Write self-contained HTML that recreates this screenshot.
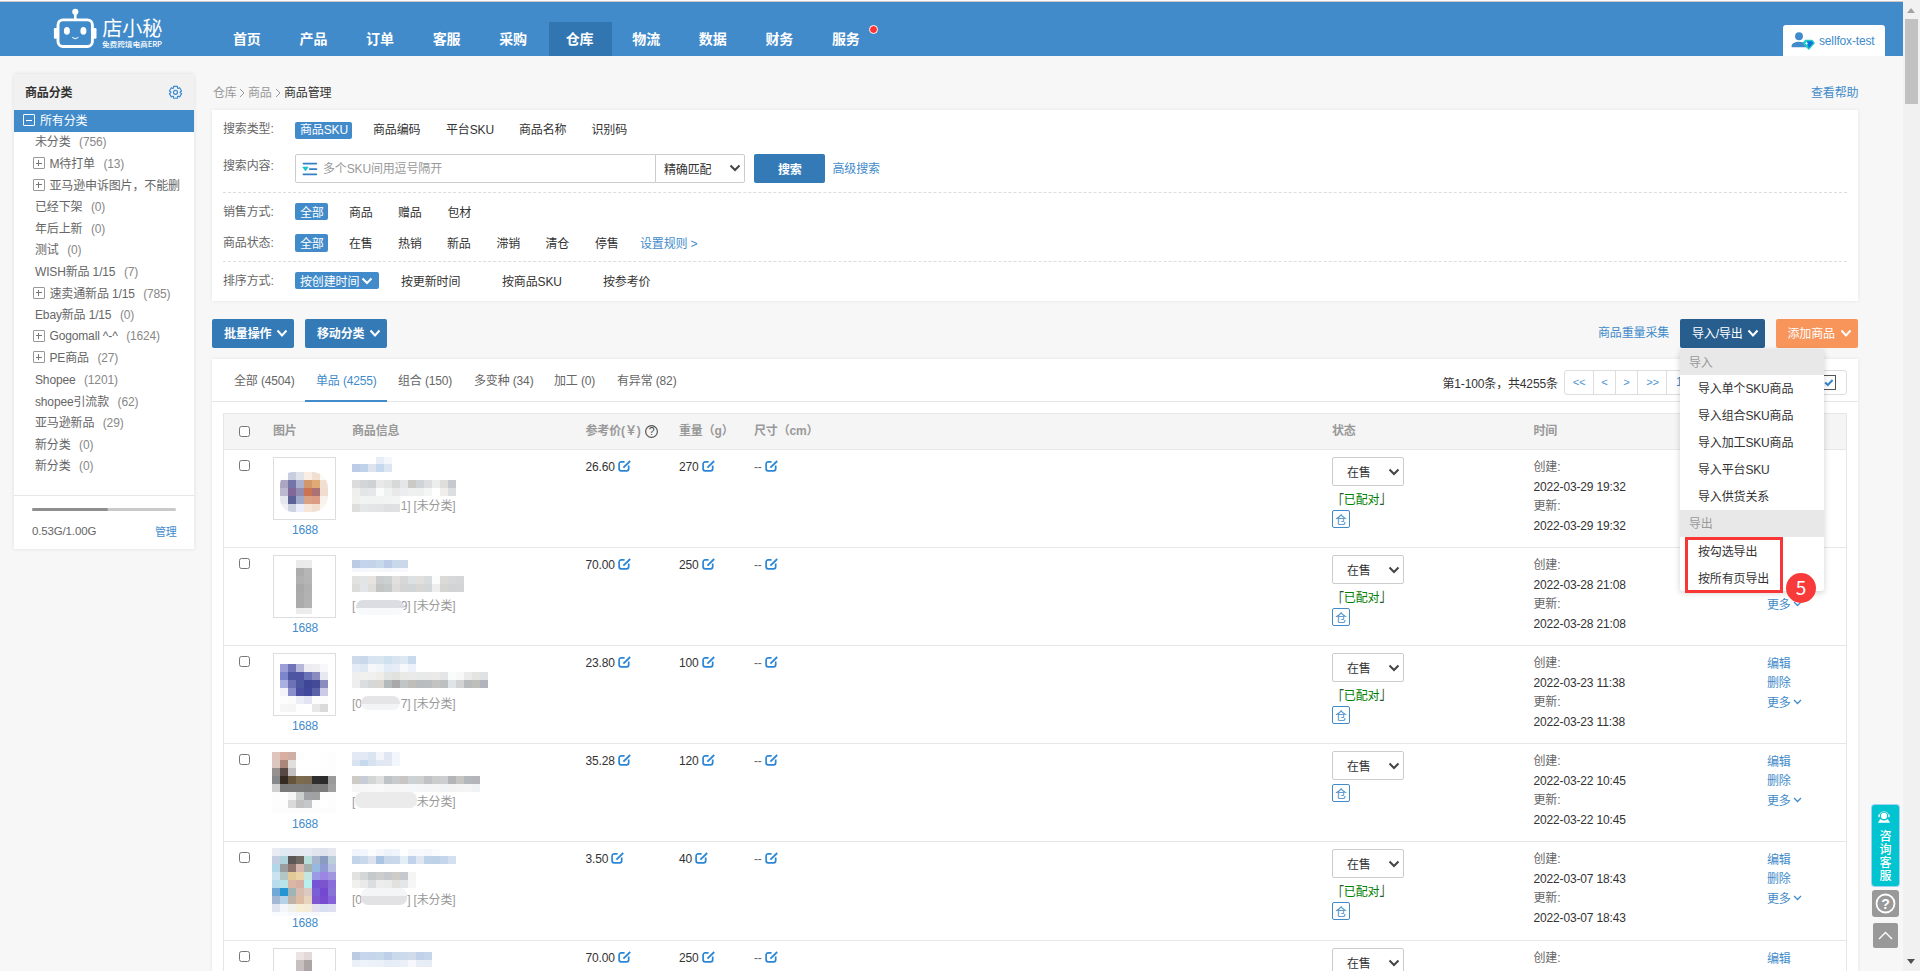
<!DOCTYPE html>
<html lang="zh-CN">
<head>
<meta charset="utf-8">
<title>商品管理</title>
<style>
*{box-sizing:border-box;margin:0;padding:0}
html,body{width:1920px;height:971px;overflow:hidden}
body{background:#f7f7f7;font-family:"Liberation Sans","Noto Sans CJK SC",sans-serif;font-size:12px;color:#333;position:relative;letter-spacing:-0.15px}
a{color:#428bca;text-decoration:none}
.abs{position:absolute}
.t{position:absolute;line-height:16px;height:16px;white-space:nowrap}
.b{font-weight:bold}
.blue{color:#428bca}
.g6{color:#666}
.g9{color:#999}
.w{color:#fff}
#topstrip{left:0;top:0;width:1920px;height:2px;background:linear-gradient(#fbfbfb 0,#fbfbfb 50%,#cdc8c5 50%,#cdc8c5 100%)}
#hdr{left:0;top:2px;width:1903px;height:54px;background:#428bca}
#nav span{position:absolute;top:30px;font-size:14px;font-weight:bold;color:#fff;line-height:18px;white-space:nowrap}
#navact{left:549px;top:22px;width:63px;height:34px;background:#3276b1}
#user{left:1783px;top:25px;width:102px;height:31px;background:#fff;border-radius:3px 3px 0 0}
#sb{left:1903px;top:0;width:17px;height:971px;background:#f1f1f1}
#sbthumb{left:1905px;top:19px;width:13px;height:85px;background:#c1c1c1}
#side{left:14px;top:74px;width:180px;height:475px;background:#fff;box-shadow:0 0 4px rgba(0,0,0,.10)}
#sidehead{left:0;top:0;width:180px;height:36px;background:#f1f1f1}
#sidesel{left:0;top:36px;width:180px;height:22px;background:#428bca}
.panel{position:absolute;background:#fff;box-shadow:0 0 4px rgba(0,0,0,.08)}
.pill{position:absolute;background:#428bca;border-radius:2px;height:17px}
.dash{position:absolute;left:223px;width:1624px;height:0;border-top:1px dashed #ddd}
.btn{position:absolute;height:29px;border-radius:2px;top:319px}
.plus{position:absolute;width:12px;height:12px;border:1px solid #999;border-radius:1px}
.plus:before{content:"";position:absolute;left:2px;top:4px;width:6px;height:2px;background:#777;height:1px;top:4.5px}
.plus:after{content:"";position:absolute;left:4.5px;top:2px;width:1px;height:6px;background:#777}
.cb{position:absolute;width:11px;height:11px;border:1px solid #767676;border-radius:2.5px;background:#fff}
.sep{position:absolute;left:224px;width:1622px;height:1px;background:#e7e7e7}
.thumb{position:absolute;left:273px;width:63px;height:63px;border:1px solid #ddd;background:#fff;overflow:hidden}
.sel{position:absolute;left:1332px;width:72px;height:29px;border:1px solid #ccc;border-radius:2px;background:#fff}
.cang{position:absolute;left:1332px;width:18px;height:18px;border:1px solid #428bca;border-radius:2px;color:#428bca;font-size:11.5px;line-height:18px;text-align:center;letter-spacing:0}
.grn{color:#008000}
.bk1,.bk2{display:inline-block;transform:scaleY(1.55);color:#2d5a2d}
.bk1{transform-origin:50% 22%}
.bk2{transform-origin:50% 82%}
</style>
</head>
<body>
<div id="topstrip" class="abs"></div><div id="hdr" class="abs"></div><div id="navact" class="abs"></div>
<svg class="abs" style="left:50px;top:4px" width="120" height="50" viewBox="0 0 120 50">
<circle cx="25.3" cy="7.8" r="3.1" fill="#fff"/>
<rect x="24" y="9" width="2.6" height="7" fill="#fff"/>
<rect x="8" y="15.9" width="34.4" height="26.6" rx="5" ry="5" fill="none" stroke="#fff" stroke-width="2.9"/>
<rect x="3.9" y="24" width="3.6" height="10.8" rx="1.2" fill="#fff"/>
<rect x="42.9" y="24" width="3.6" height="10.8" rx="1.2" fill="#fff"/>
<ellipse cx="16.9" cy="26.9" rx="3" ry="3.8" fill="#fff"/>
<ellipse cx="33.4" cy="26.9" rx="3" ry="3.8" fill="#fff"/>
<path d="M22.6 33.4q2.7 2.6 5.4 0" fill="none" stroke="#fff" stroke-width="1.1" opacity=".85" stroke-linecap="round"/>
<text x="52.2" y="32" font-size="20.5" font-weight="400" fill="#fff" font-family="Noto Sans CJK SC, sans-serif" textLength="60" lengthAdjust="spacingAndGlyphs">店小秘</text>
<text x="52" y="43.3" font-size="7.4" font-weight="500" fill="#fff" font-family="Noto Sans CJK SC, sans-serif" textLength="60" lengthAdjust="spacingAndGlyphs">免费跨境电商ERP</text>
</svg>
<div id="nav"><span style="left:233px">首页</span><span style="left:299.55px">产品</span><span style="left:366.1px">订单</span><span style="left:432.65px">客服</span><span style="left:499.2px">采购</span><span style="left:565.75px">仓库</span><span style="left:632.3px">物流</span><span style="left:698.85px">数据</span><span style="left:765.4px">财务</span><span style="left:831.95px">服务</span></div>
<div class="abs" style="left:868.5px;top:24.5px;width:9px;height:9px;border-radius:50%;background:#f33;border:1px solid #fff"></div>
<div id="user" class="abs"></div><svg class="abs" style="left:1785px;top:26px" width="40" height="28" viewBox="0 0 40 28">
<circle cx="14" cy="10.2" r="3.95" fill="#428bca"/>
<path d="M6.6 21.3v-1.2c0-2.6 3.3-4.3 7.4-4.3c3.2 0 5.4 0.9 6.6 2.2l2 3.3z" fill="#428bca"/>
<path d="M20.3 13.8h7l2.7 3.2l-6.2 7.1l-6.5-7.1z" fill="#1fcbc5"/>
<path d="M21.8 15.2h5.2l1.2 1.8l-4.4 5.2z" fill="#0b72e0"/>
<path d="M21.6 15.5l0.55 1.2l1.2 0.55l-1.2 0.55l-0.55 1.2l-0.55-1.2l-1.2-0.55l1.2-0.55z" fill="#fff"/>
</svg>
<div class="t blue" style="left:1819px;top:32.5px;">sellfox-test</div>
<div id="sb" class="abs"></div><div id="sbthumb" class="abs"></div>
<div class="abs" style="left:1907px;top:8px;width:0;height:0;border-left:4.5px solid transparent;border-right:4.5px solid transparent;border-bottom:5px solid #a3a3a3"></div>
<div class="abs" style="left:1907px;top:959px;width:0;height:0;border-left:4.5px solid transparent;border-right:4.5px solid transparent;border-top:5px solid #505050"></div>
<div id="side" class="abs"><div id="sidehead" class="abs"></div><div id="sidesel" class="abs"></div></div>
<div class="t b" style="left:25px;top:85px;">商品分类</div>
<svg class="abs" style="left:167px;top:84px" width="17" height="17" viewBox="0 0 17 17"><path d="M6.50 4.05 L6.58 2.40 L10.42 2.40 L10.50 4.05 L11.18 4.44 L12.65 3.69 L14.56 7.01 L13.18 7.91 L13.18 8.69 L14.56 9.59 L12.65 12.91 L11.18 12.16 L10.50 12.55 L10.42 14.20 L6.58 14.20 L6.50 12.55 L5.82 12.16 L4.35 12.91 L2.44 9.59 L3.82 8.69 L3.82 7.91 L2.44 7.01 L4.35 3.69 L5.82 4.44Z" fill="none" stroke="#3a8ad2" stroke-width="1.15" stroke-linejoin="round"/><circle cx="8.5" cy="8.3" r="2.0" fill="none" stroke="#3a8ad2" stroke-width="1.15"/></svg>
<div class="abs" style="left:23px;top:114px;width:12px;height:12px;border:1px solid #fff;border-radius:1px"><div class="abs" style="left:2px;top:4.5px;width:6px;height:1px;background:#fff"></div></div>
<div class="t w" style="left:40px;top:113px;">所有分类</div>
<div class="t g6" style="left:35px;top:134.4px;">未分类<span style="margin-left:8.5px;color:#888">(756)</span></div>
<div class="plus" style="left:32.5px;top:157px"></div>
<div class="t g6" style="left:49.5px;top:156px;">M待打单<span style="margin-left:8.5px;color:#888">(13)</span></div>
<div class="plus" style="left:32.5px;top:178.6px"></div>
<div class="t g6" style="left:49.5px;top:177.6px;">亚马逊申诉图片，不能删</div>
<div class="t g6" style="left:35px;top:199.2px;">已经下架<span style="margin-left:8.5px;color:#888">(0)</span></div>
<div class="t g6" style="left:35px;top:220.8px;">年后上新<span style="margin-left:8.5px;color:#888">(0)</span></div>
<div class="t g6" style="left:35px;top:242.4px;">测试<span style="margin-left:8.5px;color:#888">(0)</span></div>
<div class="t g6" style="left:35px;top:264px;">WISH新品 1/15<span style="margin-left:8.5px;color:#888">(7)</span></div>
<div class="plus" style="left:32.5px;top:286.6px"></div>
<div class="t g6" style="left:49.5px;top:285.6px;">速卖通新品 1/15<span style="margin-left:8.5px;color:#888">(785)</span></div>
<div class="t g6" style="left:35px;top:307.2px;">Ebay新品 1/15<span style="margin-left:8.5px;color:#888">(0)</span></div>
<div class="plus" style="left:32.5px;top:329.8px"></div>
<div class="t g6" style="left:49.5px;top:328.3px;">Gogomall ^-^<span style="margin-left:8.5px;color:#888">(1624)</span></div>
<div class="plus" style="left:32.5px;top:351.4px"></div>
<div class="t g6" style="left:49.5px;top:350.4px;">PE商品<span style="margin-left:8.5px;color:#888">(27)</span></div>
<div class="t g6" style="left:35px;top:371.5px;">Shopee<span style="margin-left:8.5px;color:#888">(1201)</span></div>
<div class="t g6" style="left:35px;top:393.6px;">shopee引流款<span style="margin-left:8.5px;color:#888">(62)</span></div>
<div class="t g6" style="left:35px;top:415.2px;">亚马逊新品<span style="margin-left:8.5px;color:#888">(29)</span></div>
<div class="t g6" style="left:35px;top:436.8px;">新分类<span style="margin-left:8.5px;color:#888">(0)</span></div>
<div class="t g6" style="left:35px;top:458.4px;">新分类<span style="margin-left:8.5px;color:#888">(0)</span></div>
<div class="abs" style="left:14px;top:495px;width:180px;height:1px;background:#e7e7e7"></div>
<div class="abs" style="left:32px;top:507.5px;width:144px;height:3px;background:#c9c9c9;border-radius:2px"><div style="width:76px;height:3px;background:#8e8e8e;border-radius:2px"></div></div>
<div class="t g6" style="left:32px;top:523px;font-size:11.5px">0.53G/1.00G</div>
<div class="t blue" style="left:155px;top:523.5px;font-size:11px">管理</div>
<div class="t g9" style="left:213px;top:85px;">仓库</div>
<div class="t" style="left:239px;top:84px;top:86px"><svg width="6" height="10" viewBox="0 0 6 10"><path d="M1 1l4 4-4 4" fill="none" stroke="#999" stroke-width="1"/></svg></div>
<div class="t g9" style="left:248px;top:85px;">商品</div>
<div class="t" style="left:275px;top:84px;top:86px"><svg width="6" height="10" viewBox="0 0 6 10"><path d="M1 1l4 4-4 4" fill="none" stroke="#999" stroke-width="1"/></svg></div>
<div class="t" style="left:284px;top:85px;">商品管理</div>
<div class="t blue" style="left:1811px;top:84.5px;">查看帮助</div>
<div class="panel" style="left:212px;top:110px;width:1646px;height:191px"></div>
<div class="t g6" style="left:223px;top:121px;">搜索类型:</div>
<div class="pill" style="left:295px;top:122px;width:57px"></div>
<div class="t w" style="left:300px;top:121.9px;">商品SKU</div>
<div class="t" style="left:373px;top:121.9px;">商品编码</div>
<div class="t" style="left:446px;top:121.9px;">平台SKU</div>
<div class="t" style="left:519px;top:121.9px;">商品名称</div>
<div class="t" style="left:591.5px;top:121.9px;">识别码</div>
<div class="t g6" style="left:223px;top:157.5px;">搜索内容:</div>
<div class="abs" style="left:295px;top:154px;width:361px;height:29px;border:1px solid #ccc;background:#fff;border-radius:2px 0 0 2px"></div>
<svg class="abs" style="left:300px;top:160px" width="20" height="18" viewBox="0 0 20 18">
<path d="M3.4 3.6H16.4M3.4 14.4H16.4" fill="none" stroke="#337fc5" stroke-width="1.6" stroke-linecap="round"/><path d="M9.8 9.1H16.4" fill="none" stroke="#337fc5" stroke-width="1.9" stroke-linecap="round"/>
<path d="M2.7 7h5.5l-2.75 4z" fill="#17c4cc" stroke="#17c4cc" stroke-width=".6" stroke-linejoin="round"/>
</svg>
<div class="t g9" style="left:323px;top:160.9px;">多个SKU间用逗号隔开</div>
<div class="abs" style="left:655px;top:154px;width:90px;height:29px;border:1px solid #ccc;background:#fff;border-radius:0 2px 2px 0"></div>
<div class="t" style="left:664px;top:161.5px;">精确匹配</div>
<svg class="abs" style="left:729px;top:164px" width="12" height="8" viewBox="0 0 12 8"><path d="M1.5 1.5l4.5 4.5 4.5-4.5" fill="none" stroke="#444" stroke-width="2"/></svg>
<div class="abs" style="left:754px;top:154px;width:71px;height:29px;background:#337ab7;border-radius:2px"></div>
<div class="t w b" style="left:778px;top:161.5px;">搜索</div>
<div class="t blue" style="left:832.5px;top:160.5px;">高级搜索</div>
<div class="dash" style="top:192px"></div>
<div class="t g6" style="left:223px;top:203.5px;">销售方式:</div>
<div class="pill" style="left:295px;top:203px;width:33px"></div>
<div class="t w" style="left:300px;top:204.5px;">全部</div>
<div class="t" style="left:349px;top:204.5px;">商品</div>
<div class="t" style="left:398px;top:204.5px;">赠品</div>
<div class="t" style="left:447.5px;top:204.5px;">包材</div>
<div class="t g6" style="left:223px;top:234.5px;">商品状态:</div>
<div class="pill" style="left:295px;top:234px;width:33px;height:17.5px"></div>
<div class="t w" style="left:300px;top:235.5px;">全部</div>
<div class="t" style="left:349px;top:235.5px;">在售</div>
<div class="t" style="left:398px;top:235.5px;">热销</div>
<div class="t" style="left:447px;top:235.5px;">新品</div>
<div class="t" style="left:496.5px;top:235.5px;">滞销</div>
<div class="t" style="left:545.5px;top:235.5px;">清仓</div>
<div class="t" style="left:595px;top:235.5px;">停售</div>
<div class="t blue" style="left:640px;top:235.5px;">设置规则 &gt;</div>
<div class="dash" style="top:261px"></div>
<div class="t g6" style="left:223px;top:272.5px;">排序方式:</div>
<div class="pill" style="left:295px;top:272px;width:84px"></div>
<div class="t w" style="left:300px;top:273.5px;">按创建时间</div>
<svg class="abs" style="left:361px;top:277px" width="12" height="8" viewBox="0 0 12 8"><path d="M1.5 1.5l4.5 4.5 4.5-4.5" fill="none" stroke="#fff" stroke-width="2"/></svg>
<div class="t" style="left:401px;top:273.5px;">按更新时间</div>
<div class="t" style="left:502px;top:273.5px;">按商品SKU</div>
<div class="t" style="left:603px;top:273.5px;">按参考价</div>
<div class="btn" style="left:212px;width:82px;background:#337ab7"></div>
<div class="t w b" style="left:224px;top:326px;">批量操作</div>
<svg class="abs" style="left:276px;top:329px" width="12" height="9" viewBox="0 0 12 9"><path d="M1.5 1.5l4.5 5 4.5-5" fill="none" stroke="#fff" stroke-width="2"/></svg>
<div class="btn" style="left:305px;width:82px;background:#337ab7"></div>
<div class="t w b" style="left:317px;top:326px;">移动分类</div>
<svg class="abs" style="left:369px;top:329px" width="12" height="9" viewBox="0 0 12 9"><path d="M1.5 1.5l4.5 5 4.5-5" fill="none" stroke="#fff" stroke-width="2"/></svg>
<div class="t blue" style="left:1598px;top:325px;">商品重量采集</div>
<div class="btn" style="left:1680px;width:85px;background:#285e8e"></div>
<div class="t w" style="left:1692px;top:326px;">导入/导出</div>
<svg class="abs" style="left:1747px;top:329px" width="12" height="9" viewBox="0 0 12 9"><path d="M1.5 1.5l4.5 5 4.5-5" fill="none" stroke="#fff" stroke-width="2"/></svg>
<div class="btn" style="left:1776px;width:82px;background:#f8955b"></div>
<div class="t w" style="left:1787.5px;top:326px;">添加商品</div>
<svg class="abs" style="left:1840px;top:329px" width="12" height="9" viewBox="0 0 12 9"><path d="M1.5 1.5l4.5 5 4.5-5" fill="none" stroke="#fff" stroke-width="2"/></svg>
<div class="panel" style="left:212px;top:359px;width:1646px;height:620px"></div>
<div class="t g6" style="left:234px;top:372.5px;">全部 (4504)</div>
<div class="t blue" style="left:316px;top:372.5px;">单品 (4255)</div>
<div class="t g6" style="left:398px;top:372.5px;">组合 (150)</div>
<div class="t g6" style="left:474px;top:372.5px;">多变种 (34)</div>
<div class="t g6" style="left:554px;top:372.5px;">加工 (0)</div>
<div class="t g6" style="left:617px;top:372.5px;">有异常 (82)</div>
<div class="abs" style="left:212px;top:401px;width:1646px;height:1px;background:#e7e7e7"></div>
<div class="abs" style="left:305px;top:400px;width:82px;height:2px;background:#428bca"></div>
<div class="t" style="left:1442.5px;top:375.5px;">第1-100条，共4255条</div>
<div class="abs" style="left:1564px;top:370px;width:283px;height:25px;border:1px solid #ddd;border-radius:3px;background:#fff"></div>
<div class="abs" style="left:1593px;top:371px;width:1px;height:23px;background:#ddd"></div>
<div class="abs" style="left:1615px;top:371px;width:1px;height:23px;background:#ddd"></div>
<div class="abs" style="left:1637px;top:371px;width:1px;height:23px;background:#ddd"></div>
<div class="abs" style="left:1666px;top:371px;width:1px;height:23px;background:#ddd"></div>
<div class="t" style="left:1559px;top:375.2px;font-size:11px;width:40px;text-align:center;color:#4d93cf;letter-spacing:-0.3px;font-family:'Liberation Mono',monospace">&lt;&lt;</div>
<div class="t" style="left:1584.5px;top:375.2px;font-size:11px;width:40px;text-align:center;color:#4d93cf;letter-spacing:-0.3px;font-family:'Liberation Mono',monospace">&lt;</div>
<div class="t" style="left:1606.5px;top:375.2px;font-size:11px;width:40px;text-align:center;color:#4d93cf;letter-spacing:-0.3px;font-family:'Liberation Mono',monospace">&gt;</div>
<div class="t" style="left:1632.5px;top:375.2px;font-size:11px;width:40px;text-align:center;color:#4d93cf;letter-spacing:-0.3px;font-family:'Liberation Mono',monospace">&gt;&gt;</div>
<div class="t blue" style="left:1676px;top:374px;">1</div>
<div class="abs" style="left:1822px;top:375px;width:14px;height:15px;border:1px solid #555;background:#fff"></div>
<svg class="abs" style="left:1824px;top:378px" width="10" height="9" viewBox="0 0 10 9"><path d="M1.2 4.4l2.6 2.6L8.6 2" fill="none" stroke="#3b86c9" stroke-width="2.1"/></svg>
<div class="abs" style="left:223px;top:413px;width:1624px;height:37px;background:#f5f5f5;border:1px solid #e7e7e7"></div>
<div class="abs" style="left:223px;top:449px;width:1px;height:530px;background:#e7e7e7"></div>
<div class="abs" style="left:1846px;top:449px;width:1px;height:530px;background:#e7e7e7"></div>
<div class="cb" style="left:239px;top:426px"></div>
<div class="t b g9" style="left:273px;top:423px;">图片</div>
<div class="t b g9" style="left:352px;top:423px;">商品信息</div>
<div class="t b g9" style="left:585.5px;top:423px;">参考价(￥)</div>
<div class="t b g9" style="left:679px;top:423px;">重量（g）</div>
<div class="t b g9" style="left:754px;top:423px;">尺寸（cm）</div>
<div class="t b g9" style="left:1332px;top:423px;">状态</div>
<div class="t b g9" style="left:1533.5px;top:423px;">时间</div>
<svg class="abs" style="left:645px;top:425px" width="13" height="13" viewBox="0 0 13 13"><circle cx="6.5" cy="6.5" r="5.9" fill="none" stroke="#555" stroke-width="1.2"/><text x="6.5" y="10.2" font-size="10.5" text-anchor="middle" fill="#444" font-family="Liberation Sans, sans-serif">?</text></svg>
<div class="cb" style="left:239px;top:460px"></div>
<div class="thumb" style="top:457px"></div>
<div class="t blue" style="left:292px;top:521.5px;">1688</div>
<div class="t g9" style="left:340px;width:115.5px;text-align:right;top:498px">1] [未分类]</div>
<div class="t" style="left:585.5px;top:458.5px;">26.60</div>
<svg class="abs" style="left:617.8px;top:460.0px" width="14" height="12" viewBox="0 0 14 12"><path d="M6.6 1.9H3.1a2 2 0 0 0-2 2v4.9a2 2 0 0 0 2 2h5.6a2 2 0 0 0 2-2V5.6" fill="none" stroke="#2b86d6" stroke-width="1.7"/><path d="M5.4 7.7L12.2 1" fill="none" stroke="#2b86d6" stroke-width="1.8"/></svg>
<div class="t" style="left:679px;top:458.5px;">270</div>
<svg class="abs" style="left:701.8px;top:460.0px" width="14" height="12" viewBox="0 0 14 12"><path d="M6.6 1.9H3.1a2 2 0 0 0-2 2v4.9a2 2 0 0 0 2 2h5.6a2 2 0 0 0 2-2V5.6" fill="none" stroke="#2b86d6" stroke-width="1.7"/><path d="M5.4 7.7L12.2 1" fill="none" stroke="#2b86d6" stroke-width="1.8"/></svg>
<div class="t g6" style="left:754px;top:458.5px;">--</div>
<svg class="abs" style="left:765px;top:460.0px" width="14" height="12" viewBox="0 0 14 12"><path d="M6.6 1.9H3.1a2 2 0 0 0-2 2v4.9a2 2 0 0 0 2 2h5.6a2 2 0 0 0 2-2V5.6" fill="none" stroke="#2b86d6" stroke-width="1.7"/><path d="M5.4 7.7L12.2 1" fill="none" stroke="#2b86d6" stroke-width="1.8"/></svg>
<div class="sel" style="top:457px"></div>
<div class="t" style="left:1347px;top:464.5px;">在售</div>
<svg class="abs" style="left:1388px;top:467.5px" width="12" height="8" viewBox="0 0 12 8"><path d="M1.5 1.5l4.5 4.5 4.5-4.5" fill="none" stroke="#444" stroke-width="2"/></svg>
<div class="t grn" style="left:1332px;top:492px;"><span class="bk1">「</span>已配对<span class="bk2">」</span></div>
<div class="cang" style="top:510px">仓</div>
<div class="t g6" style="left:1533.5px;top:459px;">创建:</div>
<div class="t" style="left:1533.5px;top:478.5px;">2022-03-29 19:32</div>
<div class="t g6" style="left:1533.5px;top:498px;">更新:</div>
<div class="t" style="left:1533.5px;top:517.5px;">2022-03-29 19:32</div>
<div class="sep" style="top:547px"></div>
<div class="cb" style="left:239px;top:558px"></div>
<div class="thumb" style="top:555px"></div>
<div class="t blue" style="left:292px;top:619.5px;">1688</div>
<div class="t g9" style="left:352px;top:597.5px">[</div><div class="t g9" style="left:340px;width:115.5px;text-align:right;top:597.5px">9] [未分类]</div><div class="abs" style="left:356px;top:600px;width:48px;height:15px;background:linear-gradient(#dcdde2 0,#dcdde2 55%,#f8f9fb 55%,#f8f9fb 100%);border-radius:7px"></div>
<div class="t" style="left:585.5px;top:556.5px;">70.00</div>
<svg class="abs" style="left:617.8px;top:558.0px" width="14" height="12" viewBox="0 0 14 12"><path d="M6.6 1.9H3.1a2 2 0 0 0-2 2v4.9a2 2 0 0 0 2 2h5.6a2 2 0 0 0 2-2V5.6" fill="none" stroke="#2b86d6" stroke-width="1.7"/><path d="M5.4 7.7L12.2 1" fill="none" stroke="#2b86d6" stroke-width="1.8"/></svg>
<div class="t" style="left:679px;top:556.5px;">250</div>
<svg class="abs" style="left:701.8px;top:558.0px" width="14" height="12" viewBox="0 0 14 12"><path d="M6.6 1.9H3.1a2 2 0 0 0-2 2v4.9a2 2 0 0 0 2 2h5.6a2 2 0 0 0 2-2V5.6" fill="none" stroke="#2b86d6" stroke-width="1.7"/><path d="M5.4 7.7L12.2 1" fill="none" stroke="#2b86d6" stroke-width="1.8"/></svg>
<div class="t g6" style="left:754px;top:556.5px;">--</div>
<svg class="abs" style="left:765px;top:558.0px" width="14" height="12" viewBox="0 0 14 12"><path d="M6.6 1.9H3.1a2 2 0 0 0-2 2v4.9a2 2 0 0 0 2 2h5.6a2 2 0 0 0 2-2V5.6" fill="none" stroke="#2b86d6" stroke-width="1.7"/><path d="M5.4 7.7L12.2 1" fill="none" stroke="#2b86d6" stroke-width="1.8"/></svg>
<div class="sel" style="top:555px"></div>
<div class="t" style="left:1347px;top:562.5px;">在售</div>
<svg class="abs" style="left:1388px;top:565.5px" width="12" height="8" viewBox="0 0 12 8"><path d="M1.5 1.5l4.5 4.5 4.5-4.5" fill="none" stroke="#444" stroke-width="2"/></svg>
<div class="t grn" style="left:1332px;top:590px;"><span class="bk1">「</span>已配对<span class="bk2">」</span></div>
<div class="cang" style="top:608px">仓</div>
<div class="t g6" style="left:1533.5px;top:557px;">创建:</div>
<div class="t" style="left:1533.5px;top:576.5px;">2022-03-28 21:08</div>
<div class="t g6" style="left:1533.5px;top:596px;">更新:</div>
<div class="t" style="left:1533.5px;top:615.5px;">2022-03-28 21:08</div>
<div class="t blue" style="left:1767px;top:596.5px;">更多</div>
<svg class="abs" style="left:1793px;top:600.8px" width="9" height="6" viewBox="0 0 9 6"><path d="M1 1l3.5 3.5L8 1" fill="none" stroke="#428bca" stroke-width="1.3"/></svg>
<div class="sep" style="top:645px"></div>
<div class="cb" style="left:239px;top:656px"></div>
<div class="thumb" style="top:653px"></div>
<div class="t blue" style="left:292px;top:717.5px;">1688</div>
<div class="t g9" style="left:352px;top:695.5px">[0</div><div class="t g9" style="left:340px;width:115.5px;text-align:right;top:695.5px">7] [未分类]</div><div class="abs" style="left:361px;top:696px;width:39px;height:14px;background:linear-gradient(#e5e5e8 0,#e5e5e8 58%,#f3f4f6 58%,#f3f4f6 100%);border-radius:7px"></div>
<div class="t" style="left:585.5px;top:654.5px;">23.80</div>
<svg class="abs" style="left:617.8px;top:656.0px" width="14" height="12" viewBox="0 0 14 12"><path d="M6.6 1.9H3.1a2 2 0 0 0-2 2v4.9a2 2 0 0 0 2 2h5.6a2 2 0 0 0 2-2V5.6" fill="none" stroke="#2b86d6" stroke-width="1.7"/><path d="M5.4 7.7L12.2 1" fill="none" stroke="#2b86d6" stroke-width="1.8"/></svg>
<div class="t" style="left:679px;top:654.5px;">100</div>
<svg class="abs" style="left:701.8px;top:656.0px" width="14" height="12" viewBox="0 0 14 12"><path d="M6.6 1.9H3.1a2 2 0 0 0-2 2v4.9a2 2 0 0 0 2 2h5.6a2 2 0 0 0 2-2V5.6" fill="none" stroke="#2b86d6" stroke-width="1.7"/><path d="M5.4 7.7L12.2 1" fill="none" stroke="#2b86d6" stroke-width="1.8"/></svg>
<div class="t g6" style="left:754px;top:654.5px;">--</div>
<svg class="abs" style="left:765px;top:656.0px" width="14" height="12" viewBox="0 0 14 12"><path d="M6.6 1.9H3.1a2 2 0 0 0-2 2v4.9a2 2 0 0 0 2 2h5.6a2 2 0 0 0 2-2V5.6" fill="none" stroke="#2b86d6" stroke-width="1.7"/><path d="M5.4 7.7L12.2 1" fill="none" stroke="#2b86d6" stroke-width="1.8"/></svg>
<div class="sel" style="top:653px"></div>
<div class="t" style="left:1347px;top:660.5px;">在售</div>
<svg class="abs" style="left:1388px;top:663.5px" width="12" height="8" viewBox="0 0 12 8"><path d="M1.5 1.5l4.5 4.5 4.5-4.5" fill="none" stroke="#444" stroke-width="2"/></svg>
<div class="t grn" style="left:1332px;top:688px;"><span class="bk1">「</span>已配对<span class="bk2">」</span></div>
<div class="cang" style="top:706px">仓</div>
<div class="t g6" style="left:1533.5px;top:655px;">创建:</div>
<div class="t" style="left:1533.5px;top:674.5px;">2022-03-23 11:38</div>
<div class="t g6" style="left:1533.5px;top:694px;">更新:</div>
<div class="t" style="left:1533.5px;top:713.5px;">2022-03-23 11:38</div>
<div class="t blue" style="left:1767px;top:655.5px;">编辑</div>
<div class="t blue" style="left:1767px;top:674.5px;">删除</div>
<div class="t blue" style="left:1767px;top:694.5px;">更多</div>
<svg class="abs" style="left:1793px;top:698.8px" width="9" height="6" viewBox="0 0 9 6"><path d="M1 1l3.5 3.5L8 1" fill="none" stroke="#428bca" stroke-width="1.3"/></svg>
<div class="sep" style="top:743px"></div>
<div class="cb" style="left:239px;top:754px"></div>
<div class="thumb" style="top:751px;border-color:transparent"></div>
<div class="t blue" style="left:292px;top:815.5px;">1688</div>
<div class="t g9" style="left:352px;top:793.5px">[</div><div class="t g9" style="left:340px;width:115.5px;text-align:right;top:793.5px"><span style="visibility:hidden">[</span>未分类]</div><div class="abs" style="left:355px;top:792px;width:62px;height:16px;background:#ebebec;border-radius:7px"></div>
<div class="t" style="left:585.5px;top:752.5px;">35.28</div>
<svg class="abs" style="left:617.8px;top:754.0px" width="14" height="12" viewBox="0 0 14 12"><path d="M6.6 1.9H3.1a2 2 0 0 0-2 2v4.9a2 2 0 0 0 2 2h5.6a2 2 0 0 0 2-2V5.6" fill="none" stroke="#2b86d6" stroke-width="1.7"/><path d="M5.4 7.7L12.2 1" fill="none" stroke="#2b86d6" stroke-width="1.8"/></svg>
<div class="t" style="left:679px;top:752.5px;">120</div>
<svg class="abs" style="left:701.8px;top:754.0px" width="14" height="12" viewBox="0 0 14 12"><path d="M6.6 1.9H3.1a2 2 0 0 0-2 2v4.9a2 2 0 0 0 2 2h5.6a2 2 0 0 0 2-2V5.6" fill="none" stroke="#2b86d6" stroke-width="1.7"/><path d="M5.4 7.7L12.2 1" fill="none" stroke="#2b86d6" stroke-width="1.8"/></svg>
<div class="t g6" style="left:754px;top:752.5px;">--</div>
<svg class="abs" style="left:765px;top:754.0px" width="14" height="12" viewBox="0 0 14 12"><path d="M6.6 1.9H3.1a2 2 0 0 0-2 2v4.9a2 2 0 0 0 2 2h5.6a2 2 0 0 0 2-2V5.6" fill="none" stroke="#2b86d6" stroke-width="1.7"/><path d="M5.4 7.7L12.2 1" fill="none" stroke="#2b86d6" stroke-width="1.8"/></svg>
<div class="sel" style="top:751px"></div>
<div class="t" style="left:1347px;top:758.5px;">在售</div>
<svg class="abs" style="left:1388px;top:761.5px" width="12" height="8" viewBox="0 0 12 8"><path d="M1.5 1.5l4.5 4.5 4.5-4.5" fill="none" stroke="#444" stroke-width="2"/></svg>
<div class="cang" style="top:784px">仓</div>
<div class="t g6" style="left:1533.5px;top:753px;">创建:</div>
<div class="t" style="left:1533.5px;top:772.5px;">2022-03-22 10:45</div>
<div class="t g6" style="left:1533.5px;top:792px;">更新:</div>
<div class="t" style="left:1533.5px;top:811.5px;">2022-03-22 10:45</div>
<div class="t blue" style="left:1767px;top:753.5px;">编辑</div>
<div class="t blue" style="left:1767px;top:772.5px;">删除</div>
<div class="t blue" style="left:1767px;top:792.5px;">更多</div>
<svg class="abs" style="left:1793px;top:796.8px" width="9" height="6" viewBox="0 0 9 6"><path d="M1 1l3.5 3.5L8 1" fill="none" stroke="#428bca" stroke-width="1.3"/></svg>
<div class="sep" style="top:841px"></div>
<div class="cb" style="left:239px;top:852px"></div>
<div class="thumb" style="top:849px;border-color:transparent"></div>
<div class="t blue" style="left:292px;top:915px;">1688</div>
<div class="t g9" style="left:352px;top:891.5px">[0</div><div class="t g9" style="left:340px;width:115.5px;text-align:right;top:891.5px">] [未分类]</div><div class="abs" style="left:361px;top:888px;width:46px;height:17px;background:linear-gradient(#f4f5f6 0,#f4f5f6 47%,#e2e2e5 47%,#e2e2e5 100%);border-radius:7px"></div>
<div class="t" style="left:585.5px;top:850.5px;">3.50</div>
<svg class="abs" style="left:610.8px;top:852.0px" width="14" height="12" viewBox="0 0 14 12"><path d="M6.6 1.9H3.1a2 2 0 0 0-2 2v4.9a2 2 0 0 0 2 2h5.6a2 2 0 0 0 2-2V5.6" fill="none" stroke="#2b86d6" stroke-width="1.7"/><path d="M5.4 7.7L12.2 1" fill="none" stroke="#2b86d6" stroke-width="1.8"/></svg>
<div class="t" style="left:679px;top:850.5px;">40</div>
<svg class="abs" style="left:695.3px;top:852.0px" width="14" height="12" viewBox="0 0 14 12"><path d="M6.6 1.9H3.1a2 2 0 0 0-2 2v4.9a2 2 0 0 0 2 2h5.6a2 2 0 0 0 2-2V5.6" fill="none" stroke="#2b86d6" stroke-width="1.7"/><path d="M5.4 7.7L12.2 1" fill="none" stroke="#2b86d6" stroke-width="1.8"/></svg>
<div class="t g6" style="left:754px;top:850.5px;">--</div>
<svg class="abs" style="left:765px;top:852.0px" width="14" height="12" viewBox="0 0 14 12"><path d="M6.6 1.9H3.1a2 2 0 0 0-2 2v4.9a2 2 0 0 0 2 2h5.6a2 2 0 0 0 2-2V5.6" fill="none" stroke="#2b86d6" stroke-width="1.7"/><path d="M5.4 7.7L12.2 1" fill="none" stroke="#2b86d6" stroke-width="1.8"/></svg>
<div class="sel" style="top:849px"></div>
<div class="t" style="left:1347px;top:856.5px;">在售</div>
<svg class="abs" style="left:1388px;top:859.5px" width="12" height="8" viewBox="0 0 12 8"><path d="M1.5 1.5l4.5 4.5 4.5-4.5" fill="none" stroke="#444" stroke-width="2"/></svg>
<div class="t grn" style="left:1332px;top:884px;"><span class="bk1">「</span>已配对<span class="bk2">」</span></div>
<div class="cang" style="top:902px">仓</div>
<div class="t g6" style="left:1533.5px;top:851px;">创建:</div>
<div class="t" style="left:1533.5px;top:870.5px;">2022-03-07 18:43</div>
<div class="t g6" style="left:1533.5px;top:890px;">更新:</div>
<div class="t" style="left:1533.5px;top:909.5px;">2022-03-07 18:43</div>
<div class="t blue" style="left:1767px;top:851.5px;">编辑</div>
<div class="t blue" style="left:1767px;top:870.5px;">删除</div>
<div class="t blue" style="left:1767px;top:890.5px;">更多</div>
<svg class="abs" style="left:1793px;top:894.8px" width="9" height="6" viewBox="0 0 9 6"><path d="M1 1l3.5 3.5L8 1" fill="none" stroke="#428bca" stroke-width="1.3"/></svg>
<div class="sep" style="top:940px"></div>
<div class="cb" style="left:239px;top:951px"></div>
<div class="thumb" style="top:948px"></div>
<div class="t blue" style="left:292px;top:1012.5px;">1688</div>
<!--INFO5-->
<div class="t" style="left:585.5px;top:949.5px;">70.00</div>
<svg class="abs" style="left:617.8px;top:951.0px" width="14" height="12" viewBox="0 0 14 12"><path d="M6.6 1.9H3.1a2 2 0 0 0-2 2v4.9a2 2 0 0 0 2 2h5.6a2 2 0 0 0 2-2V5.6" fill="none" stroke="#2b86d6" stroke-width="1.7"/><path d="M5.4 7.7L12.2 1" fill="none" stroke="#2b86d6" stroke-width="1.8"/></svg>
<div class="t" style="left:679px;top:949.5px;">250</div>
<svg class="abs" style="left:701.8px;top:951.0px" width="14" height="12" viewBox="0 0 14 12"><path d="M6.6 1.9H3.1a2 2 0 0 0-2 2v4.9a2 2 0 0 0 2 2h5.6a2 2 0 0 0 2-2V5.6" fill="none" stroke="#2b86d6" stroke-width="1.7"/><path d="M5.4 7.7L12.2 1" fill="none" stroke="#2b86d6" stroke-width="1.8"/></svg>
<div class="t g6" style="left:754px;top:949.5px;">--</div>
<svg class="abs" style="left:765px;top:951.0px" width="14" height="12" viewBox="0 0 14 12"><path d="M6.6 1.9H3.1a2 2 0 0 0-2 2v4.9a2 2 0 0 0 2 2h5.6a2 2 0 0 0 2-2V5.6" fill="none" stroke="#2b86d6" stroke-width="1.7"/><path d="M5.4 7.7L12.2 1" fill="none" stroke="#2b86d6" stroke-width="1.8"/></svg>
<div class="sel" style="top:948px"></div>
<div class="t" style="left:1347px;top:955.5px;">在售</div>
<svg class="abs" style="left:1388px;top:958.5px" width="12" height="8" viewBox="0 0 12 8"><path d="M1.5 1.5l4.5 4.5 4.5-4.5" fill="none" stroke="#444" stroke-width="2"/></svg>
<div class="t grn" style="left:1332px;top:983px;"><span class="bk1">「</span>已配对<span class="bk2">」</span></div>
<div class="cang" style="top:1001px">仓</div>
<div class="t g6" style="left:1533.5px;top:950px;">创建:</div>
<div class="t" style="left:1533.5px;top:969.5px;">2022-03-01 10:00</div>
<div class="t g6" style="left:1533.5px;top:989px;">更新:</div>
<div class="t" style="left:1533.5px;top:1008.5px;">2022-03-01 10:00</div>
<div class="t blue" style="left:1767px;top:950.5px;">编辑</div>
<div class="t blue" style="left:1767px;top:989.5px;">更多</div>
<svg class="abs" style="left:1793px;top:993.8px" width="9" height="6" viewBox="0 0 9 6"><path d="M1 1l3.5 3.5L8 1" fill="none" stroke="#428bca" stroke-width="1.3"/></svg>
<svg class="abs" style="left:280px;top:472px;border-radius:13px 16px 16px 13px" width="48" height="40" viewBox="0 0 48 40" shape-rendering="crispEdges"><rect x="0" y="0" width="8" height="8" fill="#fdfdfe"/><rect x="8" y="0" width="8" height="8" fill="#c9cde0"/><rect x="16" y="0" width="8" height="8" fill="#e1e3ea"/><rect x="24" y="0" width="8" height="8" fill="#f9ede4"/><rect x="32" y="0" width="8" height="8" fill="#f3dfcf"/><rect x="40" y="0" width="8" height="8" fill="#fdf9f5"/><rect x="0" y="8" width="8" height="8" fill="#aca6c2"/><rect x="8" y="8" width="8" height="8" fill="#7374a8"/><rect x="16" y="8" width="8" height="8" fill="#abb0cf"/><rect x="24" y="8" width="8" height="8" fill="#d2976b"/><rect x="32" y="8" width="8" height="8" fill="#dfaa76"/><rect x="40" y="8" width="8" height="8" fill="#f1dfd2"/><rect x="0" y="16" width="8" height="8" fill="#bbb8cf"/><rect x="8" y="16" width="8" height="8" fill="#80699a"/><rect x="16" y="16" width="8" height="8" fill="#948bb0"/><rect x="24" y="16" width="8" height="8" fill="#cc7352"/><rect x="32" y="16" width="8" height="8" fill="#ab7274"/><rect x="40" y="16" width="8" height="8" fill="#f0ddd0"/><rect x="0" y="24" width="8" height="8" fill="#e6e7ee"/><rect x="8" y="24" width="8" height="8" fill="#5c6296"/><rect x="16" y="24" width="8" height="8" fill="#a1a9cb"/><rect x="24" y="24" width="8" height="8" fill="#d9a284"/><rect x="32" y="24" width="8" height="8" fill="#dc9b84"/><rect x="40" y="24" width="8" height="8" fill="#f9f1ec"/><rect x="0" y="32" width="8" height="8" fill="#eef0f6"/><rect x="8" y="32" width="8" height="8" fill="#cdd2e1"/><rect x="16" y="32" width="8" height="8" fill="#ebeefa"/><rect x="24" y="32" width="8" height="8" fill="#f6e5d8"/><rect x="32" y="32" width="8" height="8" fill="#f3dfd0"/><rect x="40" y="32" width="8" height="8" fill="#fbf5ef"/></svg>
<svg class="abs" style="left:352px;top:457px;" width="40" height="15" viewBox="0 0 40 15" shape-rendering="crispEdges"><rect x="24" y="0" width="8" height="7" fill="#e8eef8"/><rect x="32" y="0" width="8" height="7" fill="#f3f6fb"/><rect x="0" y="7" width="8" height="8" fill="#bdcce6"/><rect x="8" y="7" width="8" height="8" fill="#c0d2ea"/><rect x="16" y="7" width="8" height="8" fill="#dde3ef"/><rect x="24" y="7" width="8" height="8" fill="#c5d8ee"/><rect x="32" y="7" width="8" height="8" fill="#dce6f2"/></svg>
<svg class="abs" style="left:352px;top:480px;" width="104" height="32" viewBox="0 0 104 32" shape-rendering="crispEdges"><rect x="0" y="0" width="8" height="8" fill="#dcdcdc"/><rect x="8" y="0" width="8" height="8" fill="#d4d5d6"/><rect x="16" y="0" width="8" height="8" fill="#d0d1d3"/><rect x="24" y="0" width="8" height="8" fill="#e9e9e9"/><rect x="32" y="0" width="8" height="8" fill="#e3e4e4"/><rect x="40" y="0" width="8" height="8" fill="#d7d9d9"/><rect x="48" y="0" width="8" height="8" fill="#e5e6e8"/><rect x="56" y="0" width="8" height="8" fill="#cbcac7"/><rect x="64" y="0" width="8" height="8" fill="#d0d3d8"/><rect x="72" y="0" width="8" height="8" fill="#dddee0"/><rect x="80" y="0" width="8" height="8" fill="#eceeee"/><rect x="88" y="0" width="8" height="8" fill="#dfdedc"/><rect x="96" y="0" width="8" height="8" fill="#c6cacf"/><rect x="0" y="8" width="8" height="8" fill="#efefed"/><rect x="8" y="8" width="8" height="8" fill="#e4e5e6"/><rect x="16" y="8" width="8" height="8" fill="#e6e7e8"/><rect x="24" y="8" width="8" height="8" fill="#fafcfb"/><rect x="32" y="8" width="8" height="8" fill="#f0f1f1"/><rect x="40" y="8" width="8" height="8" fill="#e9e9ea"/><rect x="48" y="8" width="8" height="8" fill="#ecedee"/><rect x="56" y="8" width="8" height="8" fill="#eff0f0"/><rect x="64" y="8" width="8" height="8" fill="#eef0f0"/><rect x="72" y="8" width="8" height="8" fill="#f4f5f5"/><rect x="80" y="8" width="8" height="8" fill="#ffffff"/><rect x="88" y="8" width="8" height="8" fill="#efeeec"/><rect x="96" y="8" width="8" height="8" fill="#dcdfe2"/><rect x="0" y="16" width="8" height="8" fill="#f0f0ee"/><rect x="8" y="16" width="8" height="8" fill="#f2f3f3"/><rect x="16" y="16" width="8" height="8" fill="#f1f2f2"/><rect x="24" y="16" width="8" height="8" fill="#f1f2f2"/><rect x="32" y="16" width="8" height="8" fill="#f2f3f3"/><rect x="40" y="16" width="8" height="8" fill="#f3f4f4"/><rect x="0" y="24" width="8" height="8" fill="#dededc"/><rect x="8" y="24" width="8" height="8" fill="#e6e7e9"/><rect x="16" y="24" width="8" height="8" fill="#e4e5e6"/><rect x="24" y="24" width="8" height="8" fill="#e3e4e5"/><rect x="32" y="24" width="8" height="8" fill="#dfe0e1"/><rect x="40" y="24" width="8" height="8" fill="#e0e1e2"/></svg>
<svg class="abs" style="left:296px;top:560px;" width="16" height="54" viewBox="0 0 16 54" shape-rendering="crispEdges"><rect x="0" y="0" width="8" height="8" fill="#eaeaea"/><rect x="8" y="0" width="8" height="8" fill="#ebebeb"/><rect x="0" y="8" width="8" height="8" fill="#acacac"/><rect x="8" y="8" width="8" height="8" fill="#b6b6b6"/><rect x="0" y="16" width="8" height="8" fill="#b1b1b1"/><rect x="8" y="16" width="8" height="8" fill="#b5b5b5"/><rect x="0" y="24" width="8" height="8" fill="#a9a9a9"/><rect x="8" y="24" width="8" height="8" fill="#b1b1b1"/><rect x="0" y="32" width="8" height="8" fill="#ababab"/><rect x="8" y="32" width="8" height="8" fill="#b2b2b2"/><rect x="0" y="40" width="8" height="8" fill="#ababab"/><rect x="8" y="40" width="8" height="8" fill="#b3b3b3"/><rect x="0" y="48" width="8" height="6" fill="#ececec"/><rect x="8" y="48" width="8" height="6" fill="#ededed"/></svg>
<svg class="abs" style="left:352px;top:560px;" width="56" height="12" viewBox="0 0 56 12" shape-rendering="crispEdges"><rect x="0" y="0" width="8" height="8" fill="#bccbe4"/><rect x="8" y="0" width="8" height="8" fill="#c4d4ec"/><rect x="16" y="0" width="8" height="8" fill="#c4d3ea"/><rect x="24" y="0" width="8" height="8" fill="#c9d9ec"/><rect x="32" y="0" width="8" height="8" fill="#bccbe8"/><rect x="40" y="0" width="8" height="8" fill="#c9d9ec"/><rect x="48" y="0" width="8" height="8" fill="#cbd8ea"/><rect x="0" y="8" width="8" height="4" fill="#f3f6fb"/><rect x="8" y="8" width="8" height="4" fill="#f4f7fb"/><rect x="16" y="8" width="8" height="4" fill="#f6f8fc"/><rect x="24" y="8" width="8" height="4" fill="#f5f7fb"/><rect x="32" y="8" width="8" height="4" fill="#f3f6fb"/><rect x="40" y="8" width="8" height="4" fill="#f6f8fc"/><rect x="48" y="8" width="8" height="4" fill="#f7f9fc"/></svg>
<svg class="abs" style="left:352px;top:576px;" width="112" height="16" viewBox="0 0 112 16" shape-rendering="crispEdges"><rect x="0" y="0" width="8" height="8" fill="#e2e2e0"/><rect x="8" y="0" width="8" height="8" fill="#e3e4e6"/><rect x="16" y="0" width="8" height="8" fill="#e8e3df"/><rect x="24" y="0" width="8" height="8" fill="#cbcccd"/><rect x="32" y="0" width="8" height="8" fill="#cdd0d0"/><rect x="40" y="0" width="8" height="8" fill="#e1e0de"/><rect x="48" y="0" width="8" height="8" fill="#d6d7d7"/><rect x="56" y="0" width="8" height="8" fill="#dee1e3"/><rect x="64" y="0" width="8" height="8" fill="#e2e0dd"/><rect x="72" y="0" width="8" height="8" fill="#d9dcde"/><rect x="80" y="0" width="8" height="8" fill="#fbfcfc"/><rect x="88" y="0" width="8" height="8" fill="#dbdad8"/><rect x="96" y="0" width="8" height="8" fill="#d7d8d9"/><rect x="104" y="0" width="8" height="8" fill="#d5d6d8"/><rect x="0" y="8" width="8" height="8" fill="#dcdcda"/><rect x="8" y="8" width="8" height="8" fill="#e4e5e8"/><rect x="16" y="8" width="8" height="8" fill="#dfdedc"/><rect x="24" y="8" width="8" height="8" fill="#c3c4c4"/><rect x="32" y="8" width="8" height="8" fill="#c6c9c9"/><rect x="40" y="8" width="8" height="8" fill="#dddcda"/><rect x="48" y="8" width="8" height="8" fill="#d3d5d5"/><rect x="56" y="8" width="8" height="8" fill="#d2d5d6"/><rect x="64" y="8" width="8" height="8" fill="#d8d7d4"/><rect x="72" y="8" width="8" height="8" fill="#d3d7da"/><rect x="80" y="8" width="8" height="8" fill="#eeeeee"/><rect x="88" y="8" width="8" height="8" fill="#d5d5d3"/><rect x="96" y="8" width="8" height="8" fill="#d2d3d4"/><rect x="104" y="8" width="8" height="8" fill="#d3d4d5"/></svg>
<svg class="abs" style="left:280px;top:664px;" width="48" height="48" viewBox="0 0 48 48" shape-rendering="crispEdges"><rect x="0" y="0" width="8" height="8" fill="#9b9fd5"/><rect x="8" y="0" width="8" height="8" fill="#7073b7"/><rect x="16" y="0" width="8" height="8" fill="#b7b7d9"/><rect x="24" y="0" width="8" height="8" fill="#ececf2"/><rect x="32" y="0" width="8" height="8" fill="#eeeef3"/><rect x="40" y="0" width="8" height="8" fill="#f8f8fa"/><rect x="0" y="8" width="8" height="8" fill="#7b86cb"/><rect x="8" y="8" width="8" height="8" fill="#4f56a1"/><rect x="16" y="8" width="8" height="8" fill="#4f55a3"/><rect x="24" y="8" width="8" height="8" fill="#6a72b8"/><rect x="32" y="8" width="8" height="8" fill="#8a8cbf"/><rect x="40" y="8" width="8" height="8" fill="#e8e9f0"/><rect x="0" y="16" width="8" height="8" fill="#aab0df"/><rect x="8" y="16" width="8" height="8" fill="#6c72b5"/><rect x="16" y="16" width="8" height="8" fill="#4b579f"/><rect x="24" y="16" width="8" height="8" fill="#3f4696"/><rect x="32" y="16" width="8" height="8" fill="#444a98"/><rect x="40" y="16" width="8" height="8" fill="#8a8cbd"/><rect x="0" y="24" width="8" height="8" fill="#f4f3fa"/><rect x="8" y="24" width="8" height="8" fill="#8a8fcb"/><rect x="16" y="24" width="8" height="8" fill="#4a4fa1"/><rect x="24" y="24" width="8" height="8" fill="#41479a"/><rect x="32" y="24" width="8" height="8" fill="#5c62a8"/><rect x="40" y="24" width="8" height="8" fill="#cbcbe6"/><rect x="0" y="32" width="8" height="8" fill="#fdfdfd"/><rect x="8" y="32" width="8" height="8" fill="#fcfbfb"/><rect x="16" y="32" width="8" height="8" fill="#ecedf7"/><rect x="24" y="32" width="8" height="8" fill="#e3e3f1"/><rect x="32" y="32" width="8" height="8" fill="#fdfdfd"/><rect x="40" y="32" width="8" height="8" fill="#fcfcfc"/><rect x="0" y="40" width="8" height="8" fill="#f6f6f6"/><rect x="8" y="40" width="8" height="8" fill="#f5f5f5"/><rect x="16" y="40" width="8" height="8" fill="#fefefe"/><rect x="24" y="40" width="8" height="8" fill="#ffffff"/><rect x="32" y="40" width="8" height="8" fill="#e8e8e8"/><rect x="40" y="40" width="8" height="8" fill="#dadada"/></svg>
<svg class="abs" style="left:352px;top:656px;" width="64" height="16" viewBox="0 0 64 16" shape-rendering="crispEdges"><rect x="0" y="0" width="8" height="8" fill="#ccdaec"/><rect x="8" y="0" width="8" height="8" fill="#c9d9eb"/><rect x="16" y="0" width="8" height="8" fill="#d8e4f1"/><rect x="24" y="0" width="8" height="8" fill="#d9e5f1"/><rect x="32" y="0" width="8" height="8" fill="#cfe0ef"/><rect x="40" y="0" width="8" height="8" fill="#d9e4f0"/><rect x="48" y="0" width="8" height="8" fill="#dde8f3"/><rect x="56" y="0" width="8" height="8" fill="#c9daee"/><rect x="0" y="8" width="8" height="8" fill="#e3ecf7"/><rect x="8" y="8" width="8" height="8" fill="#dfe9f4"/><rect x="16" y="8" width="8" height="8" fill="#f5f7fb"/><rect x="24" y="8" width="8" height="8" fill="#f1f4f9"/><rect x="32" y="8" width="8" height="8" fill="#e3ecf6"/><rect x="40" y="8" width="8" height="8" fill="#e6edf6"/><rect x="48" y="8" width="8" height="8" fill="#f6f8fc"/><rect x="56" y="8" width="8" height="8" fill="#ecf1fa"/></svg>
<svg class="abs" style="left:352px;top:672px;" width="136" height="16" viewBox="0 0 136 16" shape-rendering="crispEdges"><rect x="0" y="0" width="8" height="8" fill="#efefef"/><rect x="8" y="0" width="8" height="8" fill="#f1f1f0"/><rect x="16" y="0" width="8" height="8" fill="#f0f1ef"/><rect x="24" y="0" width="8" height="8" fill="#efedea"/><rect x="32" y="0" width="8" height="8" fill="#e3e4e4"/><rect x="40" y="0" width="8" height="8" fill="#e1e1e0"/><rect x="48" y="0" width="8" height="8" fill="#e9e9e8"/><rect x="56" y="0" width="8" height="8" fill="#eaeaea"/><rect x="64" y="0" width="8" height="8" fill="#e8e9e9"/><rect x="72" y="0" width="8" height="8" fill="#e9e9e9"/><rect x="80" y="0" width="8" height="8" fill="#ebeae9"/><rect x="88" y="0" width="8" height="8" fill="#e4e5e6"/><rect x="96" y="0" width="8" height="8" fill="#fafbfb"/><rect x="104" y="0" width="8" height="8" fill="#f8f8f8"/><rect x="112" y="0" width="8" height="8" fill="#ebebeb"/><rect x="120" y="0" width="8" height="8" fill="#e4e4e1"/><rect x="128" y="0" width="8" height="8" fill="#dfe2e4"/><rect x="0" y="8" width="8" height="8" fill="#eeeeee"/><rect x="8" y="8" width="8" height="8" fill="#dcddde"/><rect x="16" y="8" width="8" height="8" fill="#d6d7d7"/><rect x="24" y="8" width="8" height="8" fill="#dad6d2"/><rect x="32" y="8" width="8" height="8" fill="#b4b9bb"/><rect x="40" y="8" width="8" height="8" fill="#a9a9a9"/><rect x="48" y="8" width="8" height="8" fill="#c1c5c5"/><rect x="56" y="8" width="8" height="8" fill="#bfbebb"/><rect x="64" y="8" width="8" height="8" fill="#b8bcbe"/><rect x="72" y="8" width="8" height="8" fill="#b9bdc0"/><rect x="80" y="8" width="8" height="8" fill="#c3c3c1"/><rect x="88" y="8" width="8" height="8" fill="#bebfc1"/><rect x="96" y="8" width="8" height="8" fill="#e0e4e6"/><rect x="104" y="8" width="8" height="8" fill="#d2d3d4"/><rect x="112" y="8" width="8" height="8" fill="#b8babb"/><rect x="120" y="8" width="8" height="8" fill="#bfbfba"/><rect x="128" y="8" width="8" height="8" fill="#b1b4bc"/></svg>
<svg class="abs" style="left:272px;top:752px;" width="64" height="61" viewBox="0 0 64 61" shape-rendering="crispEdges"><rect x="0" y="0" width="8" height="8" fill="#e0c5bf"/><rect x="8" y="0" width="8" height="8" fill="#d9afa2"/><rect x="16" y="0" width="8" height="8" fill="#cfaea5"/><rect x="24" y="0" width="8" height="8" fill="#fdfdfd"/><rect x="32" y="0" width="8" height="8" fill="#ffffff"/><rect x="40" y="0" width="8" height="8" fill="#ffffff"/><rect x="48" y="0" width="8" height="8" fill="#fefefe"/><rect x="56" y="0" width="8" height="8" fill="#fdfdfd"/><rect x="0" y="8" width="8" height="8" fill="#dcc6c0"/><rect x="8" y="8" width="8" height="8" fill="#ab877b"/><rect x="16" y="8" width="8" height="8" fill="#e0dfdd"/><rect x="24" y="8" width="8" height="8" fill="#ffffff"/><rect x="32" y="8" width="8" height="8" fill="#ffffff"/><rect x="40" y="8" width="8" height="8" fill="#ffffff"/><rect x="48" y="8" width="8" height="8" fill="#fefefe"/><rect x="56" y="8" width="8" height="8" fill="#fdfdfd"/><rect x="0" y="16" width="8" height="8" fill="#959190"/><rect x="8" y="16" width="8" height="8" fill="#574843"/><rect x="16" y="16" width="8" height="8" fill="#c2c0c0"/><rect x="24" y="16" width="8" height="8" fill="#fefefe"/><rect x="32" y="16" width="8" height="8" fill="#fefefe"/><rect x="40" y="16" width="8" height="8" fill="#fefefe"/><rect x="48" y="16" width="8" height="8" fill="#fdfdfd"/><rect x="56" y="16" width="8" height="8" fill="#fdfdfd"/><rect x="0" y="24" width="8" height="8" fill="#868889"/><rect x="8" y="24" width="8" height="8" fill="#342a22"/><rect x="16" y="24" width="8" height="8" fill="#66553a"/><rect x="24" y="24" width="8" height="8" fill="#7d6b4f"/><rect x="32" y="24" width="8" height="8" fill="#786950"/><rect x="40" y="24" width="8" height="8" fill="#2f2e2e"/><rect x="48" y="24" width="8" height="8" fill="#2c2b2b"/><rect x="56" y="24" width="8" height="8" fill="#9b9a9a"/><rect x="0" y="32" width="8" height="8" fill="#d0d0d0"/><rect x="8" y="32" width="8" height="8" fill="#7a7a7a"/><rect x="16" y="32" width="8" height="8" fill="#7b7b7b"/><rect x="24" y="32" width="8" height="8" fill="#7b7b7b"/><rect x="32" y="32" width="8" height="8" fill="#797979"/><rect x="40" y="32" width="8" height="8" fill="#7d7d7d"/><rect x="48" y="32" width="8" height="8" fill="#7c7c7c"/><rect x="56" y="32" width="8" height="8" fill="#a0a0a0"/><rect x="0" y="40" width="8" height="8" fill="#fdfdfd"/><rect x="8" y="40" width="8" height="8" fill="#fefefe"/><rect x="16" y="40" width="8" height="8" fill="#f5f5f5"/><rect x="24" y="40" width="8" height="8" fill="#cdcfce"/><rect x="32" y="40" width="8" height="8" fill="#a1a2a5"/><rect x="40" y="40" width="8" height="8" fill="#a0a1a2"/><rect x="48" y="40" width="8" height="8" fill="#fdfdfd"/><rect x="56" y="40" width="8" height="8" fill="#fdfdfd"/><rect x="0" y="48" width="8" height="8" fill="#fdfdfd"/><rect x="8" y="48" width="8" height="8" fill="#fdfdfd"/><rect x="16" y="48" width="8" height="8" fill="#d9d9d9"/><rect x="24" y="48" width="8" height="8" fill="#c1c1c2"/><rect x="32" y="48" width="8" height="8" fill="#c6c7c8"/><rect x="40" y="48" width="8" height="8" fill="#fdfdfd"/><rect x="48" y="48" width="8" height="8" fill="#ffffff"/><rect x="56" y="48" width="8" height="8" fill="#fdfdfd"/><rect x="0" y="56" width="8" height="5" fill="#fcfcfc"/><rect x="8" y="56" width="8" height="5" fill="#fcfcfc"/><rect x="16" y="56" width="8" height="5" fill="#fcfcfc"/><rect x="24" y="56" width="8" height="5" fill="#fcfcfc"/><rect x="32" y="56" width="8" height="5" fill="#fcfcfc"/><rect x="40" y="56" width="8" height="5" fill="#fcfcfc"/><rect x="48" y="56" width="8" height="5" fill="#fcfcfc"/><rect x="56" y="56" width="8" height="5" fill="#fcfcfc"/></svg>
<svg class="abs" style="left:352px;top:752px;" width="48" height="14" viewBox="0 0 48 14" shape-rendering="crispEdges"><rect x="0" y="0" width="8" height="8" fill="#e4eaf5"/><rect x="8" y="0" width="8" height="8" fill="#e3eaf5"/><rect x="16" y="0" width="8" height="8" fill="#dbe5f2"/><rect x="24" y="0" width="8" height="8" fill="#f3f5fa"/><rect x="32" y="0" width="8" height="8" fill="#e0e6f2"/><rect x="40" y="0" width="8" height="8" fill="#f3f7fb"/><rect x="0" y="8" width="8" height="6" fill="#d9e4f2"/><rect x="8" y="8" width="8" height="6" fill="#c6d9ed"/><rect x="16" y="8" width="8" height="6" fill="#d6e2f0"/><rect x="24" y="8" width="8" height="6" fill="#e1e8f4"/><rect x="32" y="8" width="8" height="6" fill="#e3e8f3"/><rect x="40" y="8" width="8" height="6" fill="#f3f6fb"/></svg>
<svg class="abs" style="left:352px;top:776px;" width="128" height="16" viewBox="0 0 128 16" shape-rendering="crispEdges"><rect x="0" y="0" width="8" height="8" fill="#cecbc7"/><rect x="8" y="0" width="8" height="8" fill="#c7cdd6"/><rect x="16" y="0" width="8" height="8" fill="#d4d5d5"/><rect x="24" y="0" width="8" height="8" fill="#e0e0e0"/><rect x="32" y="0" width="8" height="8" fill="#bec3c7"/><rect x="40" y="0" width="8" height="8" fill="#c9cacb"/><rect x="48" y="0" width="8" height="8" fill="#c8c5c4"/><rect x="56" y="0" width="8" height="8" fill="#cdd2d6"/><rect x="64" y="0" width="8" height="8" fill="#cfd0d0"/><rect x="72" y="0" width="8" height="8" fill="#c0c2c6"/><rect x="80" y="0" width="8" height="8" fill="#cbcccc"/><rect x="88" y="0" width="8" height="8" fill="#cdcecf"/><rect x="96" y="0" width="8" height="8" fill="#b3b5b8"/><rect x="104" y="0" width="8" height="8" fill="#c6c5c1"/><rect x="112" y="0" width="8" height="8" fill="#b4b7bb"/><rect x="120" y="0" width="8" height="8" fill="#b3b5ba"/><rect x="0" y="8" width="8" height="8" fill="#f6f6f6"/><rect x="8" y="8" width="8" height="8" fill="#f7f7f7"/><rect x="16" y="8" width="8" height="8" fill="#f8f8f8"/><rect x="24" y="8" width="8" height="8" fill="#f9f9f9"/><rect x="32" y="8" width="8" height="8" fill="#f6f6f6"/><rect x="40" y="8" width="8" height="8" fill="#f6f6f6"/><rect x="48" y="8" width="8" height="8" fill="#f7f7f7"/><rect x="56" y="8" width="8" height="8" fill="#f6f7f8"/><rect x="64" y="8" width="8" height="8" fill="#f5f6f7"/><rect x="72" y="8" width="8" height="8" fill="#f4f5f6"/><rect x="80" y="8" width="8" height="8" fill="#f5f5f5"/><rect x="88" y="8" width="8" height="8" fill="#f2f3f4"/><rect x="96" y="8" width="8" height="8" fill="#f3f3f3"/><rect x="104" y="8" width="8" height="8" fill="#f4f4f4"/><rect x="112" y="8" width="8" height="8" fill="#f5f5f5"/><rect x="120" y="8" width="8" height="8" fill="#f1f2f3"/></svg>
<svg class="abs" style="left:272px;top:848px;" width="64" height="68" viewBox="0 0 64 68" shape-rendering="crispEdges"><rect x="0" y="0" width="8" height="8" fill="#e9edf3"/><rect x="8" y="0" width="8" height="8" fill="#e1e9f2"/><rect x="16" y="0" width="8" height="8" fill="#e4e8f2"/><rect x="24" y="0" width="8" height="8" fill="#e5e9f2"/><rect x="32" y="0" width="8" height="8" fill="#e6eaf3"/><rect x="40" y="0" width="8" height="8" fill="#e0e5ee"/><rect x="48" y="0" width="8" height="8" fill="#dfe3ed"/><rect x="56" y="0" width="8" height="8" fill="#e5e8ef"/><rect x="0" y="8" width="8" height="8" fill="#c5cfe3"/><rect x="8" y="8" width="8" height="8" fill="#b0d2dc"/><rect x="16" y="8" width="8" height="8" fill="#5c5757"/><rect x="24" y="8" width="8" height="8" fill="#6f6863"/><rect x="32" y="8" width="8" height="8" fill="#b8dedc"/><rect x="40" y="8" width="8" height="8" fill="#a7b6cf"/><rect x="48" y="8" width="8" height="8" fill="#8a9cbf"/><rect x="56" y="8" width="8" height="8" fill="#bacfd9"/><rect x="0" y="16" width="8" height="8" fill="#b1d8e9"/><rect x="8" y="16" width="8" height="8" fill="#9a9d9d"/><rect x="16" y="16" width="8" height="8" fill="#8d7570"/><rect x="24" y="16" width="8" height="8" fill="#d6b7b0"/><rect x="32" y="16" width="8" height="8" fill="#a5b0ad"/><rect x="40" y="16" width="8" height="8" fill="#98b9df"/><rect x="48" y="16" width="8" height="8" fill="#8f9bd2"/><rect x="56" y="16" width="8" height="8" fill="#b9c0e2"/><rect x="0" y="24" width="8" height="8" fill="#cbe2ef"/><rect x="8" y="24" width="8" height="8" fill="#b3c6c5"/><rect x="16" y="24" width="8" height="8" fill="#e1c998"/><rect x="24" y="24" width="8" height="8" fill="#ead3a6"/><rect x="32" y="24" width="8" height="8" fill="#c4e6e1"/><rect x="40" y="24" width="8" height="8" fill="#9c9ae6"/><rect x="48" y="24" width="8" height="8" fill="#9b86e3"/><rect x="56" y="24" width="8" height="8" fill="#a295df"/><rect x="0" y="32" width="8" height="8" fill="#b9dbee"/><rect x="8" y="32" width="8" height="8" fill="#b7e5e8"/><rect x="16" y="32" width="8" height="8" fill="#dbb5a6"/><rect x="24" y="32" width="8" height="8" fill="#d5b0a3"/><rect x="32" y="32" width="8" height="8" fill="#b7f0ee"/><rect x="40" y="32" width="8" height="8" fill="#7654d6"/><rect x="48" y="32" width="8" height="8" fill="#7a55cd"/><rect x="56" y="32" width="8" height="8" fill="#8a6dda"/><rect x="0" y="40" width="8" height="8" fill="#70a8d8"/><rect x="8" y="40" width="8" height="8" fill="#2596d3"/><rect x="16" y="40" width="8" height="8" fill="#a1b4b5"/><rect x="24" y="40" width="8" height="8" fill="#d9bcb0"/><rect x="32" y="40" width="8" height="8" fill="#dbcac2"/><rect x="40" y="40" width="8" height="8" fill="#7a5fd6"/><rect x="48" y="40" width="8" height="8" fill="#7249d0"/><rect x="56" y="40" width="8" height="8" fill="#8a73d7"/><rect x="0" y="48" width="8" height="8" fill="#a3b9d3"/><rect x="8" y="48" width="8" height="8" fill="#b5d2e9"/><rect x="16" y="48" width="8" height="8" fill="#bfb2a6"/><rect x="24" y="48" width="8" height="8" fill="#dcbda3"/><rect x="32" y="48" width="8" height="8" fill="#e7d4bc"/><rect x="40" y="48" width="8" height="8" fill="#7f57d0"/><rect x="48" y="48" width="8" height="8" fill="#774cd0"/><rect x="56" y="48" width="8" height="8" fill="#8663da"/><rect x="0" y="56" width="8" height="8" fill="#e1e5f0"/><rect x="8" y="56" width="8" height="8" fill="#f3f7fb"/><rect x="16" y="56" width="8" height="8" fill="#f0f1ea"/><rect x="24" y="56" width="8" height="8" fill="#f6efd6"/><rect x="32" y="56" width="8" height="8" fill="#f4ecd7"/><rect x="40" y="56" width="8" height="8" fill="#e3e0ef"/><rect x="48" y="56" width="8" height="8" fill="#d7dff2"/><rect x="56" y="56" width="8" height="8" fill="#dedff1"/><rect x="0" y="64" width="8" height="4" fill="#fafbfd"/><rect x="8" y="64" width="8" height="4" fill="#fbfcfe"/><rect x="16" y="64" width="8" height="4" fill="#f6f8fc"/><rect x="24" y="64" width="8" height="4" fill="#f5f7fc"/><rect x="32" y="64" width="8" height="4" fill="#f5f8fc"/><rect x="40" y="64" width="8" height="4" fill="#f6f8fc"/><rect x="48" y="64" width="8" height="4" fill="#fdfdfe"/><rect x="56" y="64" width="8" height="4" fill="#fdfdfe"/></svg>
<svg class="abs" style="left:352px;top:849px;" width="104" height="15" viewBox="0 0 104 15" shape-rendering="crispEdges"><rect x="0" y="0" width="8" height="7" fill="#f0f4fb"/><rect x="8" y="0" width="8" height="7" fill="#f2f5fb"/><rect x="16" y="0" width="8" height="7" fill="#fbfcfe"/><rect x="24" y="0" width="8" height="7" fill="#f3f6fb"/><rect x="32" y="0" width="8" height="7" fill="#eef3fa"/><rect x="40" y="0" width="8" height="7" fill="#f0f4fb"/><rect x="48" y="0" width="8" height="7" fill="#ffffff"/><rect x="56" y="0" width="8" height="7" fill="#f6f8fc"/><rect x="64" y="0" width="8" height="7" fill="#f7f9fc"/><rect x="72" y="0" width="8" height="7" fill="#f4f7fb"/><rect x="80" y="0" width="8" height="7" fill="#fafbfd"/><rect x="0" y="7" width="8" height="8" fill="#c2d3ea"/><rect x="8" y="7" width="8" height="8" fill="#c9d8eb"/><rect x="16" y="7" width="8" height="8" fill="#dce3ef"/><rect x="24" y="7" width="8" height="8" fill="#a9c5e3"/><rect x="32" y="7" width="8" height="8" fill="#c8d7ea"/><rect x="40" y="7" width="8" height="8" fill="#c9d8ea"/><rect x="48" y="7" width="8" height="8" fill="#e3eef6"/><rect x="56" y="7" width="8" height="8" fill="#c1d2ea"/><rect x="64" y="7" width="8" height="8" fill="#dfe7f3"/><rect x="72" y="7" width="8" height="8" fill="#bfd3e8"/><rect x="80" y="7" width="8" height="8" fill="#bdd1e7"/><rect x="88" y="7" width="8" height="8" fill="#c4d6eb"/><rect x="96" y="7" width="8" height="8" fill="#d3e0f0"/></svg>
<svg class="abs" style="left:352px;top:872px;" width="64" height="16" viewBox="0 0 64 16" shape-rendering="crispEdges"><rect x="0" y="0" width="8" height="8" fill="#e2e2e1"/><rect x="8" y="0" width="8" height="8" fill="#d5d6d7"/><rect x="16" y="0" width="8" height="8" fill="#c5c9cc"/><rect x="24" y="0" width="8" height="8" fill="#cccdcd"/><rect x="32" y="0" width="8" height="8" fill="#c5c9ce"/><rect x="40" y="0" width="8" height="8" fill="#cfcbc7"/><rect x="48" y="0" width="8" height="8" fill="#c5c9cd"/><rect x="56" y="0" width="8" height="8" fill="#f5f5f6"/><rect x="0" y="8" width="8" height="8" fill="#f0f0ef"/><rect x="8" y="8" width="8" height="8" fill="#eaeaea"/><rect x="16" y="8" width="8" height="8" fill="#dcdddf"/><rect x="24" y="8" width="8" height="8" fill="#ecedec"/><rect x="32" y="8" width="8" height="8" fill="#eaebeb"/><rect x="40" y="8" width="8" height="8" fill="#e2e1df"/><rect x="48" y="8" width="8" height="8" fill="#e5e6e7"/><rect x="56" y="8" width="8" height="8" fill="#f6f6f7"/></svg>
<svg class="abs" style="left:296px;top:952px;" width="16" height="24" viewBox="0 0 16 24" shape-rendering="crispEdges"><rect x="0" y="0" width="8" height="8" fill="#ece3e3"/><rect x="8" y="0" width="8" height="8" fill="#e3d9d9"/><rect x="0" y="8" width="8" height="8" fill="#c6c0c0"/><rect x="8" y="8" width="8" height="8" fill="#aba5a5"/><rect x="0" y="16" width="8" height="8" fill="#c6c0c0"/><rect x="8" y="16" width="8" height="8" fill="#aba5a5"/></svg>
<svg class="abs" style="left:352px;top:952px;" width="80" height="15" viewBox="0 0 80 15" shape-rendering="crispEdges"><rect x="0" y="0" width="8" height="8" fill="#bccbe2"/><rect x="8" y="0" width="8" height="8" fill="#c7d6ec"/><rect x="16" y="0" width="8" height="8" fill="#c6d5ea"/><rect x="24" y="0" width="8" height="8" fill="#c8d8eb"/><rect x="32" y="0" width="8" height="8" fill="#bfcfe8"/><rect x="40" y="0" width="8" height="8" fill="#cad9eb"/><rect x="48" y="0" width="8" height="8" fill="#cddaeb"/><rect x="56" y="0" width="8" height="8" fill="#d0dcec"/><rect x="64" y="0" width="8" height="8" fill="#c0d1e9"/><rect x="72" y="0" width="8" height="8" fill="#c5d5ea"/><rect x="0" y="8" width="8" height="7" fill="#ebf0f8"/><rect x="8" y="8" width="8" height="7" fill="#eff3fa"/><rect x="16" y="8" width="8" height="7" fill="#edf1f9"/><rect x="24" y="8" width="8" height="7" fill="#ecf1f8"/><rect x="32" y="8" width="8" height="7" fill="#e6edf6"/><rect x="40" y="8" width="8" height="7" fill="#e8eef7"/><rect x="48" y="8" width="8" height="7" fill="#ebf0f8"/><rect x="56" y="8" width="8" height="7" fill="#f6f8fc"/><rect x="64" y="8" width="8" height="7" fill="#e8edf6"/><rect x="72" y="8" width="8" height="7" fill="#e6edf6"/></svg>
<div class="abs" style="left:1680px;top:349px;width:144px;height:242px;background:#fff;border-radius:0 0 3px 3px;box-shadow:0 2px 6px rgba(0,0,0,.18)"></div>
<div class="abs" style="left:1680px;top:349px;width:144px;height:26px;background:#e8e8e8"></div>
<div class="t g9" style="left:1689px;top:354.5px;">导入</div>
<div class="t" style="left:1698px;top:381.2px;">导入单个SKU商品</div>
<div class="t" style="left:1698px;top:408.2px;">导入组合SKU商品</div>
<div class="t" style="left:1698px;top:435.2px;">导入加工SKU商品</div>
<div class="t" style="left:1698px;top:462.2px;">导入平台SKU</div>
<div class="t" style="left:1698px;top:489.2px;">导入供货关系</div>
<div class="abs" style="left:1680px;top:510px;width:144px;height:27px;background:#e8e8e8"></div>
<div class="t g9" style="left:1689px;top:516px;">导出</div>
<div class="t" style="left:1698px;top:543.5px;">按勾选导出</div>
<div class="t" style="left:1698px;top:570.5px;">按所有页导出</div>
<div class="abs" style="left:1685px;top:537px;width:98px;height:56px;border:3px solid #f83636"></div>
<div class="abs" style="left:1786px;top:573.3px;width:30px;height:30px;border-radius:50%;background:#f83a3a;color:#fff;font-size:19px;line-height:27.5px;text-align:center;font-family:'Noto Sans CJK SC',sans-serif;letter-spacing:0">5</div>
<div class="abs" style="left:1872px;top:805px;width:27px;height:81px;background:#00c4cf;border-radius:3px;box-shadow:0 0 0 1px rgba(90,180,240,.55)"></div>
<svg class="abs" style="left:1874px;top:808px" width="20" height="17" viewBox="0 0 20 17">
<path d="M5.3 8.2a4.7 4.7 0 0 1 9.4 0" fill="none" stroke="#fff" stroke-opacity=".55" stroke-width="1.1"/>
<rect x="4.2" y="6.6" width="1.7" height="2.8" rx=".8" fill="#fff" fill-opacity=".8"/>
<rect x="14.1" y="6.6" width="1.7" height="2.8" rx=".8" fill="#fff" fill-opacity=".8"/>
<circle cx="10" cy="7.9" r="3.1" fill="#fff"/>
<path d="M3.9 14.8l2.4-3.7q3.7 3 7.4 0l2.4 3.7z" fill="#fff"/>
</svg>
<div class="t w" style="left:1879.5px;top:828.1px;font-size:12px;font-weight:500;font-family:'Noto Sans CJK SC',sans-serif">咨</div>
<div class="t w" style="left:1879.5px;top:840.9px;font-size:12px;font-weight:500;font-family:'Noto Sans CJK SC',sans-serif">询</div>
<div class="t w" style="left:1879.5px;top:853.7px;font-size:12px;font-weight:500;font-family:'Noto Sans CJK SC',sans-serif">客</div>
<div class="t w" style="left:1879.5px;top:866.5px;font-size:12px;font-weight:500;font-family:'Noto Sans CJK SC',sans-serif">服</div>
<div class="abs" style="left:1872px;top:890px;width:27px;height:27px;background:#999;border-radius:3px"></div>
<svg class="abs" style="left:1875px;top:893px" width="21" height="21" viewBox="0 0 21 21"><circle cx="10.5" cy="10.5" r="9" fill="none" stroke="#fff" stroke-width="1.8"/><text x="10.5" y="15.5" font-size="14" font-weight="bold" text-anchor="middle" fill="#fff" font-family="Liberation Sans, sans-serif">?</text></svg>
<div class="abs" style="left:1873px;top:923px;width:25px;height:25px;background:#999;border-radius:2px"></div>
<svg class="abs" style="left:1878px;top:931px" width="15" height="9" viewBox="0 0 15 9"><path d="M1 8l6.5-6.5L14 8" fill="none" stroke="#fff" stroke-width="1.4"/></svg>
</body>
</html>
